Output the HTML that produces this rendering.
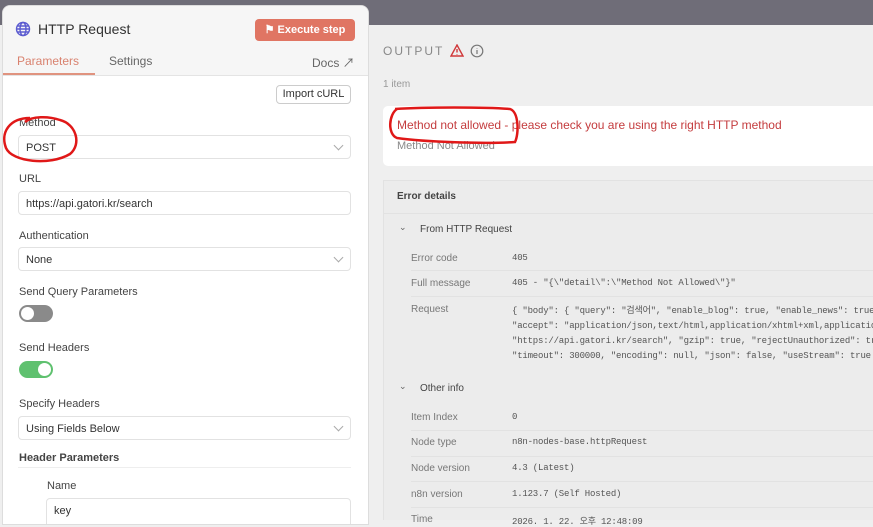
<!DOCTYPE html>
<html><head><meta charset="utf-8"><style>
*{box-sizing:border-box;margin:0;padding:0}
body{width:873px;height:520px;overflow:hidden;background:#efefef;font-family:"Liberation Sans","Noto Sans CJK KR",sans-serif;position:relative;color:#444}
.top{position:absolute;left:0;top:0;width:873px;height:25px;background:#6f6d78}
.left{position:absolute;left:2px;top:5px;width:367px;height:520px;background:#fff;border-radius:8px 8px 0 0;border:1px solid #ddd;overflow:hidden}
.hdr{height:70px;background:#f6f6f6;border-bottom:1px solid #e4e4e4;position:relative}
.abs{position:absolute}
.lbl{position:absolute;left:16px;font-size:11px;color:#444}
.inp{position:absolute;left:15px;width:333px;height:24px;border:1px solid #e2e2e2;border-radius:4px;font-size:11px;color:#333;padding:6px 7px;background:#fff}
.chev{position:absolute;right:8px;top:6px;width:7px;height:7px;border-right:1px solid #aaa;border-bottom:1px solid #aaa;transform:rotate(45deg)}
.tog{position:absolute;left:16px;width:34px;height:17px;border-radius:9px}
.tog i{position:absolute;top:2px;width:13px;height:13px;border-radius:50%;background:#fff}
.r{position:absolute;font-size:10px;color:#777}
.mono{font-family:"Liberation Mono","Noto Sans CJK KR",monospace;font-size:9px;color:#555;letter-spacing:-0.2px}
.row{position:absolute;left:411px;width:462px;border-top:1px solid #e2e2e2}
</style></head><body>
<div class="top"></div>
<div class="left">
 <div class="hdr">
  <svg class="abs" style="left:12px;top:15px" width="16" height="16" viewBox="0 0 16 16" fill="none" stroke="#5b5bd0" stroke-width="1.4"><circle cx="8" cy="8" r="6.5"/><ellipse cx="8" cy="8" rx="3" ry="6.5"/><path d="M1.5 8h13M2.5 5h11M2.5 11h11"/></svg>
  <div class="abs" style="left:35px;top:15px;font-size:14px;color:#333">HTTP Request</div>
  <div class="abs" style="left:252px;top:13px;width:100px;height:22px;background:#e07563;border-radius:4px;color:#fff;font-size:11px;font-weight:bold;text-align:center;line-height:22px">&#9873; Execute step</div>
  <div class="abs" style="left:14px;top:48px;font-size:12px;color:#d9826f">Parameters</div>
  <div class="abs" style="left:0;top:67px;width:92px;height:2px;background:#e0937f"></div>
  <div class="abs" style="left:106px;top:48px;font-size:12px;color:#666">Settings</div>
  <div class="abs" style="left:309px;top:48px;font-size:12px;color:#666">Docs &#8599;</div>
 </div>
 <div class="abs" style="left:273px;top:79px;width:75px;height:19px;border:1px solid #ccc;border-radius:4px;font-size:11px;text-align:center;line-height:17px;color:#333">Import cURL</div>
 <div class="lbl" style="top:111px">Method</div>
 <div class="inp" style="top:129px">POST<span class="chev"></span></div>
 <div class="lbl" style="top:167px">URL</div>
 <div class="inp" style="top:185px">https://api.gatori.kr/search</div>
 <div class="lbl" style="top:224px">Authentication</div>
 <div class="inp" style="top:241px">None<span class="chev"></span></div>
 <div class="lbl" style="top:280px">Send Query Parameters</div>
 <div class="tog" style="top:299px;background:#8a8a8a"><i style="left:2px"></i></div>
 <div class="lbl" style="top:336px">Send Headers</div>
 <div class="tog" style="top:355px;background:#5fc16f"><i style="right:2px"></i></div>
 <div class="lbl" style="top:392px">Specify Headers</div>
 <div class="inp" style="top:410px">Using Fields Below<span class="chev"></span></div>
 <div class="lbl" style="top:446px;font-weight:bold;color:#444">Header Parameters</div>
 <div class="abs" style="left:15px;top:461px;width:333px;height:1px;background:#eee"></div>
 <div class="lbl" style="left:44px;top:474px">Name</div>
 <div class="inp" style="left:43px;width:305px;top:492px;height:30px">key</div>
</div>
<svg class="abs" style="left:0;top:110px" width="80" height="60"><path d="M30 8 C10 8 0 22 6 38 C12 52 50 56 70 44 C82 34 76 14 60 10 C48 6 32 6 25 12" fill="none" stroke="#e01818" stroke-width="2.5"/></svg>
<div class="abs" style="left:383px;top:44px;font-size:12px;letter-spacing:2px;color:#888">OUTPUT</div>
<svg class="abs" style="left:450px;top:44px" width="14" height="13" viewBox="0 0 14 13" fill="none" stroke="#d0383a" stroke-width="1.4"><path d="M7 1L13 12H1Z M7 5v3.5M7 10v.5"/></svg>
<svg class="abs" style="left:470px;top:44px" width="14" height="14" viewBox="0 0 14 14" fill="none" stroke="#777" stroke-width="1.2"><circle cx="7" cy="7" r="5.8"/><path d="M7 6v4M7 4v.5"/></svg>
<div class="abs" style="left:383px;top:79px;font-size:10px;color:#999">1 item</div>
<div class="abs" style="left:383px;top:106px;width:490px;height:60px;background:#fff;border-radius:5px 0 0 5px"></div>
<div class="abs" style="left:397px;top:118px;font-size:12px;color:#c43c3e">Method not allowed - please check you are using the right HTTP method</div>
<div class="abs" style="left:397px;top:140px;font-size:11px;color:#888">Method Not Allowed</div>
<svg class="abs" style="left:385px;top:104px" width="138" height="42"><path d="M10 5 C40 3 100 3 125 5 C134 8 134 30 130 38 C100 40 40 38 12 34 C2 30 4 10 12 5" fill="none" stroke="#e01818" stroke-width="2.5"/></svg>
<div class="abs" style="left:383px;top:180px;width:490px;height:340px;border:1px solid #e2e2e2;border-right:none;border-bottom:none;background:#ececec"></div>
<div class="abs" style="left:383px;top:213px;width:490px;height:1px;background:#e2e2e2"></div>
<div class="abs" style="left:397px;top:191px;font-size:10px;font-weight:bold;color:#444">Error details</div>
<div class="abs" style="left:399px;top:222px;font-size:9px;color:#666">&#8964;</div>
<div class="abs" style="left:420px;top:224px;font-size:10px;color:#444">From HTTP Request</div>
<div class="r" style="left:411px;top:253px">Error code</div><div class="r mono" style="left:512px;top:253px">405</div>
<div class="row" style="top:270px"></div>
<div class="r" style="left:411px;top:278px">Full message</div><div class="r mono" style="left:512px;top:278px">405 - "{\"detail\":\"Method Not Allowed\"}"</div>
<div class="row" style="top:296px"></div>
<div class="r" style="left:411px;top:304px">Request</div>
<div class="r mono" style="left:512px;top:304px;line-height:15px;white-space:nowrap">{ "body": { "query": "검색어", "enable_blog": true, "enable_news": true,<br>"accept": "application/json,text/html,application/xhtml+xml,application/<br>"https://api.gatori.kr/search", "gzip": true, "rejectUnauthorized": true<br>"timeout": 300000, "encoding": null, "json": false, "useStream": true }</div>
<div class="abs" style="left:399px;top:381px;font-size:9px;color:#666">&#8964;</div>
<div class="abs" style="left:420px;top:383px;font-size:10px;color:#444">Other info</div>
<div class="r" style="left:411px;top:412px">Item Index</div><div class="r mono" style="left:512px;top:412px">0</div>
<div class="row" style="top:430px"></div>
<div class="r" style="left:411px;top:437px">Node type</div><div class="r mono" style="left:512px;top:437px">n8n-nodes-base.httpRequest</div>
<div class="row" style="top:456px"></div>
<div class="r" style="left:411px;top:463px">Node version</div><div class="r mono" style="left:512px;top:463px">4.3 (Latest)</div>
<div class="row" style="top:481px"></div>
<div class="r" style="left:411px;top:489px">n8n version</div><div class="r mono" style="left:512px;top:489px">1.123.7 (Self Hosted)</div>
<div class="row" style="top:507px"></div>
<div class="r" style="left:411px;top:514px">Time</div><div class="r mono" style="left:512px;top:514px">2026. 1. 22. 오후 12:48:09</div>
</body></html>
